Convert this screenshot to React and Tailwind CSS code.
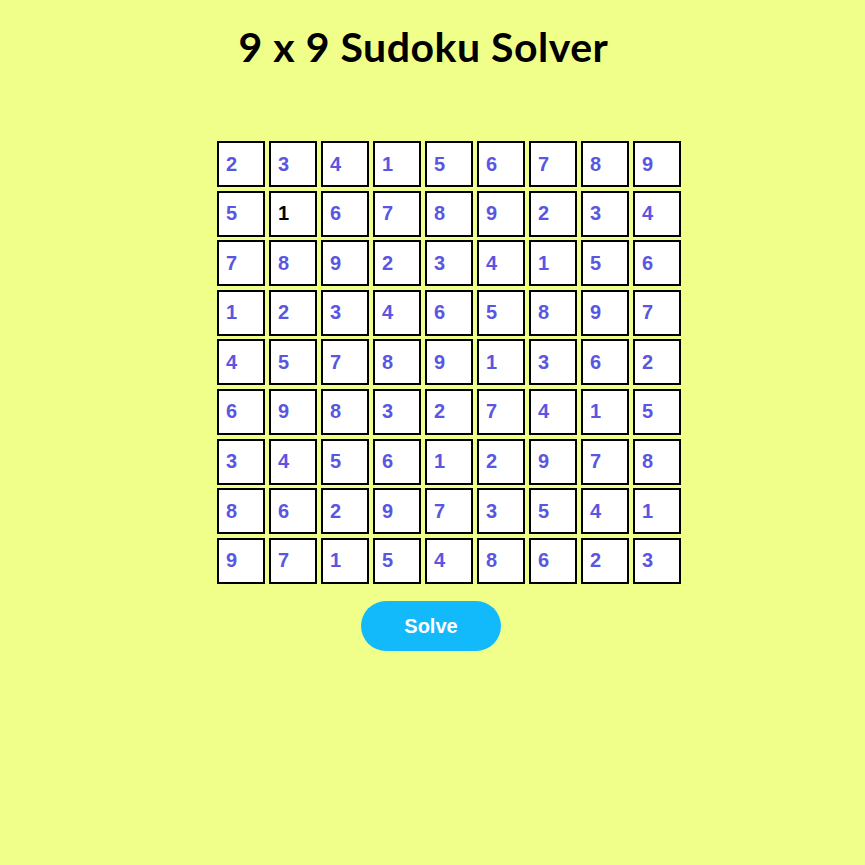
import React, { useState } from "react";

const INITIAL = [
  [2, 3, 4, 1, 5, 6, 7, 8, 9],
  [5, 1, 6, 7, 8, 9, 2, 3, 4],
  [7, 8, 9, 2, 3, 4, 1, 5, 6],
  [1, 2, 3, 4, 6, 5, 8, 9, 7],
  [4, 5, 7, 8, 9, 1, 3, 6, 2],
  [6, 9, 8, 3, 2, 7, 4, 1, 5],
  [3, 4, 5, 6, 1, 2, 9, 7, 8],
  [8, 6, 2, 9, 7, 3, 5, 4, 1],
  [9, 7, 1, 5, 4, 8, 6, 2, 3],
];

const GIVEN = { "1-1": true };

export default function App() {
  const [board, setBoard] = useState(INITIAL);

  const handleChange = (r, c, value) => {
    const next = board.map((row) => [...row]);
    next[r][c] = value.replace(/[^1-9]/g, "").slice(-1);
    setBoard(next);
  };

  return (
    <div className="min-h-screen bg-[#efff8a] font-['Liberation_Sans',Arial,sans-serif]">
      <h1 className="pt-[22px] text-center text-[41px] leading-[50px] font-bold text-black font-['Lato',sans-serif] tracking-[0.5px] pr-[18px]">
        9 x 9 Sudoku Solver
      </h1>

      <div className="mt-[69px] pl-[217px]">
        <div className="grid w-[464px] grid-cols-9 gap-x-1 gap-y-[3.6px]">
          {board.map((row, r) =>
            row.map((val, c) => (
              <input
                key={`${r}-${c}`}
                value={val}
                onChange={(e) => handleChange(r, c, e.target.value)}
                className={`h-[46px] w-[48px] border-2 border-black bg-white pl-[7px] text-[20px] font-bold outline-none ${
                  GIVEN[`${r}-${c}`] ? "text-black" : "text-[#5b56e2]"
                }`}
              />
            ))
          )}
        </div>
      </div>

      <div className="mt-[17px] flex justify-center pr-[3px]">
        <button className="h-[50px] w-[140px] rounded-full bg-[#12b9fb] text-[20px] font-bold text-white">
          Solve
        </button>
      </div>
    </div>
  );
}
